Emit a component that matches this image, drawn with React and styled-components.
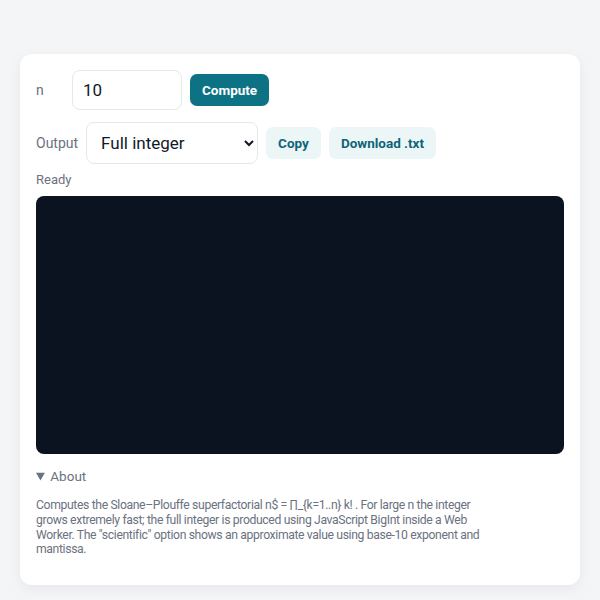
import React, { useState } from 'react';
import styled, { createGlobalStyle } from 'styled-components';

const GlobalStyle = createGlobalStyle`
  html, body {
    margin: 0;
    background: #f3f5f7;
    font-family: Roboto, "Liberation Sans", sans-serif;
    color: #111827;
  }
`;

const Page = styled.div`
  padding: 54px 20px 14px;
`;

const Card = styled.div`
  background: #ffffff;
  border-radius: 12px;
  box-shadow: 0 4px 14px rgba(15, 23, 42, 0.06);
  padding: 16px 16px 28px;
`;

const Row = styled.div`
  display: flex;
  align-items: center;
  gap: 8px;
  margin-bottom: ${p => p.$mb || 0}px;
`;

const Label = styled.label`
  font-size: 14px;
  color: #6b7280;
  min-width: ${p => p.$w || 0}px;
`;

const NumberInput = styled.input`
  box-sizing: border-box;
  width: 110px;
  height: 40px;
  padding: 0 10px;
  border: 1px solid #e5e7eb;
  border-radius: 8px;
  font-family: inherit;
  font-size: 17px;
  color: #111827;
`;

const Select = styled.select`
  box-sizing: border-box;
  width: 172px;
  height: 42px;
  padding: 0 10px;
  border: 1px solid #e5e7eb;
  border-radius: 8px;
  background: #fff;
  font-family: inherit;
  font-size: 17px;
  color: #111827;
`;

const Button = styled.button`
  height: 32px;
  padding: 0 12px;
  border: none;
  border-radius: 7px;
  font-family: inherit;
  font-size: 13.5px;
  font-weight: 700;
  cursor: pointer;
  background: ${p => (p.$primary ? '#0e7285' : '#edf6f7')};
  color: ${p => (p.$primary ? '#ffffff' : '#0e6577')};
`;

const Status = styled.div`
  font-size: 13px;
  color: #6b7280;
  margin-bottom: 9px;
`;

const Output = styled.pre`
  margin: 0;
  height: 258px;
  background: #0b1220;
  border-radius: 8px;
`;

const About = styled.details`
  margin-top: 14px;
  font-size: 13px;
  color: #6b7280;
`;

const Summary = styled.summary`
  cursor: pointer;
  margin-bottom: 14px;
  font-size: 13.5px;
`;

const Text = styled.p`
  margin: 0;
  max-width: 450px;
  font-size: 12.2px;
  letter-spacing: -0.36px;
  line-height: 14.8px;
`;

export default function App() {
  const [n, setN] = useState('10');
  const [mode, setMode] = useState('full');
  return (
    <Page>
      <GlobalStyle />
      <Card>
        <Row $mb={12}>
          <Label $w={28}>n</Label>
          <NumberInput type="number" value={n} onChange={e => setN(e.target.value)} />
          <Button $primary>Compute</Button>
        </Row>
        <Row $mb={8}>
          <Label>Output</Label>
          <Select value={mode} onChange={e => setMode(e.target.value)}>
            <option value="full">Full integer</option>
            <option value="sci">Scientific</option>
          </Select>
          <Button>Copy</Button>
          <Button>Download .txt</Button>
        </Row>
        <Status>Ready</Status>
        <Output />
        <About open>
          <Summary>About</Summary>
          <Text>
            Computes the Sloane–Plouffe superfactorial n$ = ∏_{'{'}k=1..n{'}'} k! . For large n the integer grows
            extremely fast; the full integer is produced using JavaScript BigInt inside a Web Worker. The
            "scientific" option shows an approximate value using base-10 exponent and mantissa.
          </Text>
        </About>
      </Card>
    </Page>
  );
}
